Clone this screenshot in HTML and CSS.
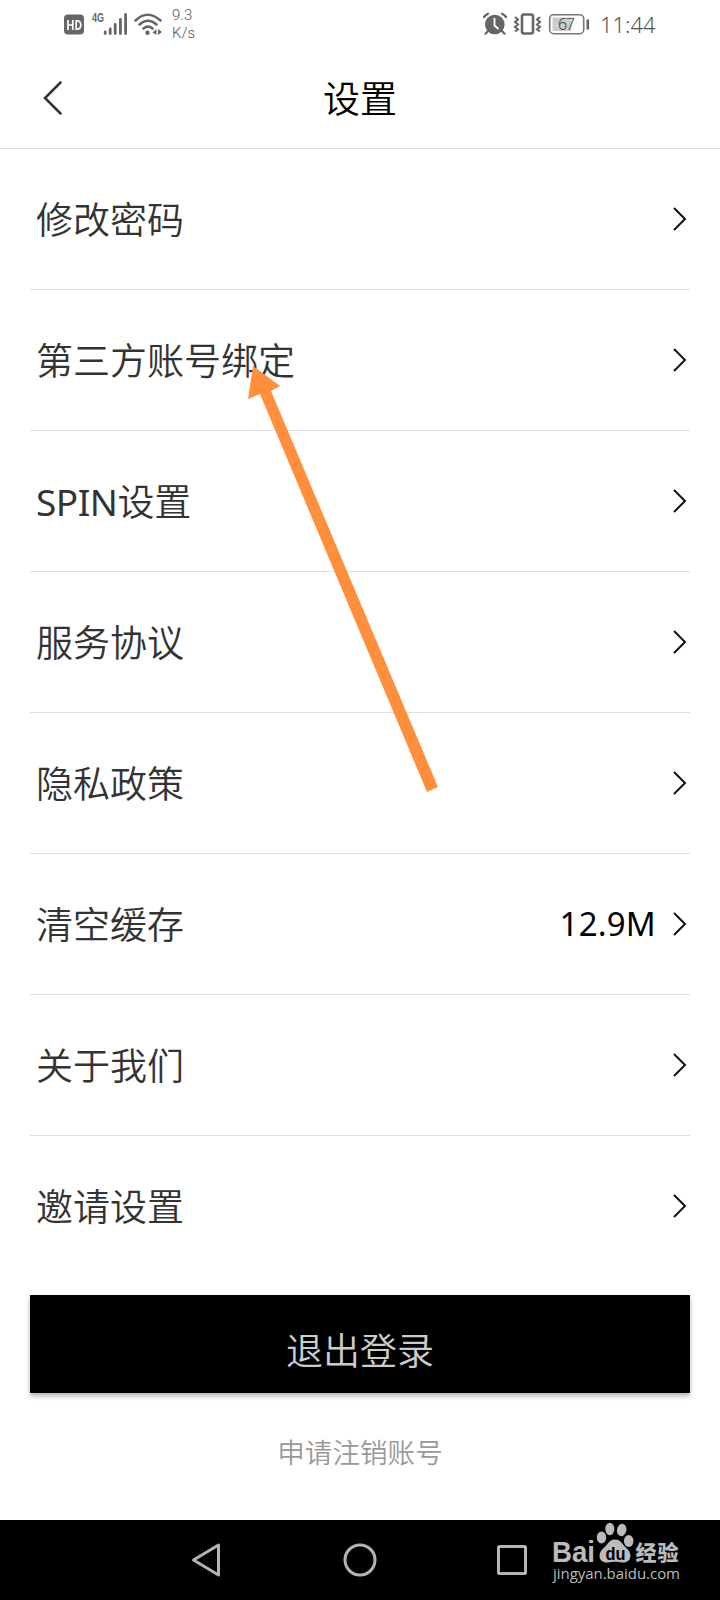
FILE: index.html
```html
<!DOCTYPE html>
<html lang="zh-CN">
<head>
	<meta charset="UTF-8">
	<title>设置</title>
	<link rel="stylesheet" href="styles.css">
</head>
<body>
	<div class="phone">
		<!-- 状态栏 -->
		<div class="status">
			<svg class="status-left" width="100" height="48" viewBox="0 0 100 48">
				<rect x="0" y="14.5" width="20" height="20" rx="4" fill="#666"/>
				<path d="M4 20v10M8.800 20v10M4 25H9M12.200 20.900v8.200h1.600q3-.3 3-4.100t-3-4.100z" fill="none" stroke="#fff" stroke-width="1.700"/>
				<text x="28" y="22" class="net" textLength="12" lengthAdjust="spacingAndGlyphs">4G</text>
				<path d="M41.200 32v1.500M46.200 29v4.500M51.200 24.500v9M56.400 19.500v14M61.600 14.500v19" fill="none" stroke="#666" stroke-width="2.800" stroke-linecap="round"/>
				<path d="M71.500 20.500q12-11.500 25 0M75.500 24.500q8.500-7.500 17 0M79.500 28.500q4.500-3.600 9 0" fill="none" stroke="#666" stroke-width="2.600" stroke-linecap="round"/>
				<circle cx="83.500" cy="32.700" r="2.200" fill="#666"/>
				<path d="M92.500 29v6l-4-2.500zM94 29v6l4-3z" fill="#666"/>
			</svg>
			<div class="speed">9.3<br>K/s</div>
			<svg class="status-right" width="110" height="48" viewBox="0 0 110 48">
				<circle cx="11.800" cy="24.500" r="9.800" fill="#666"/>
				<path d="M1 17q1.500-2 4-3.300M19 13.700q2.500 1.300 4 3.300M5 31l-2.500 2.800M19 31l2.500 2.800" fill="none" stroke="#666" stroke-width="2.200" stroke-linecap="round"/>
				<path d="M11.500 18v7.500l4 3.500" fill="none" stroke="#fff" stroke-width="1.800"/>
				<rect x="39" y="14.500" width="11" height="19" rx="2" fill="none" stroke="#666" stroke-width="2.600"/>
				<path d="M32 17l3 2.500-3 2.500 3 2.500-3 2.500 3 2.500-3 2M57 17l-3 2.500 3 2.500-3 2.500 3 2.500-3 2.500 3 2" fill="none" stroke="#666" stroke-width="2"/>
				<rect x="66.700" y="14.700" width="34" height="19" rx="4" fill="none" stroke="#777" stroke-width="1.600"/>
				<rect x="69.500" y="17.500" width="19" height="13.500" fill="#ccc"/>
				<path d="M104.800 20.500v8" stroke="#666" stroke-width="2.600" stroke-linecap="round"/>
				<text x="75" y="30" class="battery" textLength="17">67</text>
			</svg>
			<div class="time">11:44</div>
		</div>

		<!-- 标题 -->
		<div class="header">
			<svg class="back" width="20" height="34" viewBox="0 0 20 34"><path d="M17.500 1.500L2 17l15.500 15.500" fill="none" stroke="#333" stroke-width="2.500" stroke-linecap="round"/></svg>
			<h1>设置</h1>
		</div>

		<ul class="list">
			<li><span>修改密码</span><svg class="more" viewBox="0 0 14 24"><path d="M1 1l11 11L1 23"/></svg></li>
			<li><span>第三方账号绑定</span><svg class="more" viewBox="0 0 14 24"><path d="M1 1l11 11L1 23"/></svg></li>
			<li><span><b>SPIN</b>设置</span><svg class="more" viewBox="0 0 14 24"><path d="M1 1l11 11L1 23"/></svg></li>
			<li><span>服务协议</span><svg class="more" viewBox="0 0 14 24"><path d="M1 1l11 11L1 23"/></svg></li>
			<li><span>隐私政策</span><svg class="more" viewBox="0 0 14 24"><path d="M1 1l11 11L1 23"/></svg></li>
			<li><span>清空缓存</span><em>12.9M</em><svg class="more" viewBox="0 0 14 24"><path d="M1 1l11 11L1 23"/></svg></li>
			<li><span>关于我们</span><svg class="more" viewBox="0 0 14 24"><path d="M1 1l11 11L1 23"/></svg></li>
			<li><span>邀请设置</span><svg class="more" viewBox="0 0 14 24"><path d="M1 1l11 11L1 23"/></svg></li>
		</ul>

		<a class="logout" href="#">退出登录</a>
		<a class="cancel" href="#">申请注销账号</a>

		<!-- 底部导航 -->
		<div class="nav">
			<svg width="32" height="36" viewBox="0 0 32 36"><path d="M27.500 3v30L2.500 18z"/></svg>
			<svg width="36" height="36" viewBox="0 0 36 36"><circle cx="18" cy="18" r="15"/></svg>
			<svg width="32" height="32" viewBox="0 0 32 32"><rect x="1.500" y="2.500" width="27" height="27" rx="1"/></svg>
		</div>

		<!-- 箭头 -->
		<svg class="arrow" width="200" height="440" viewBox="0 0 200 440">
			<path d="M12 5l27 20-9 5 167 396-11 5L19 33l-12 5z" fill="#ff8f3c"/>
		</svg>

		<!-- 水印 -->
		<svg class="mark" width="140" height="70" viewBox="0 0 140 70">
			<text x="2" y="42" class="bai" textLength="43" lengthAdjust="spacingAndGlyphs">Bai</text>
			<g fill="#bbb">
				<ellipse cx="51.500" cy="17.500" rx="4.700" ry="6"/>
				<ellipse cx="59.800" cy="9" rx="4.500" ry="6.200"/>
				<ellipse cx="71.700" cy="10" rx="4.700" ry="6.200" transform="rotate(12 71.700 10)"/>
				<ellipse cx="78.700" cy="21" rx="4.800" ry="6"/>
				<path d="M65 19.500c4 0 6 2 8 5 2 3 7 5 7.500 11 0 5-4 7.500-8.500 7-5-1-9-1-14 0-5 .5-8.500-2-8.500-7 .5-6 5.500-8 7.500-11 2-3 4-5 8-5z"/>
			</g>
			<text x="55.500" y="39.500" class="du" textLength="20" lengthAdjust="spacingAndGlyphs">du</text>
			<text x="85.500" y="40" class="jy" textLength="43">经验</text>
			<text x="3" y="59" class="url" textLength="127">jingyan.baidu.com</text>
		</svg>
	</div>
</body>
</html>
```
FILE: styles.css
```css
* {
	margin: 0;
	padding: 0;
	list-style: none;
	box-sizing: border-box;
}
body {
	background: #fff;
	font-family: "Noto Sans", "Noto Sans CJK SC", sans-serif;
}
a {
	text-decoration: none;
}
.phone {
	position: relative;
	width: 720px;
	height: 1600px;
	overflow: hidden;
	display: flex;
	flex-direction: column;
}
.status {
	height: 48px;
	padding: 0 64px;
	display: flex;
	align-items: center;
	color: #666;
}
.net {
	font: bold 12px "Liberation Sans", sans-serif;
	fill: #666;
}
.speed {
	margin-left: 8px;
	font: 300 15px/18px Roboto, sans-serif;
	color: #555;
}
.status-right {
	margin-left: auto;
}
.battery {
	font: 300 16px "Noto Sans", sans-serif;
	fill: #444;
}
.time {
	margin-left: 7px;
	width: 56px;
	font-size: 22px;
	font-weight: 350;
	color: #555;
	white-space: nowrap;
}
.header {
	height: 101px;
	padding: 0 43px;
	display: grid;
	grid-template-columns: 1fr auto 1fr;
	align-items: center;
	border-bottom: 1px solid #e0e0e0;
}
.header h1 {
	padding-top: 1px;
	font-size: 37px;
	font-weight: 350;
	line-height: 50px;
	color: #000;
}
.list {
	padding: 0 30px;
}
.list li {
	height: 141px;
	padding: 0 3px 0 6px;
	display: flex;
	align-items: center;
	border-bottom: 1px solid #e0e0e0;
	font-size: 37px;
	font-weight: 350;
	line-height: 50px;
	color: #333;
}
.list li:last-child {
	height: 140px;
	border-bottom: 0;
}
.list span {
	padding-top: 1px;
}
.list b {
	font-weight: 400;
	letter-spacing: -0.5px;
}
.list em {
	margin-left: auto;
	margin-right: 17px;
	font-size: 33px;
	font-style: normal;
	font-weight: 400;
	letter-spacing: 0.2px;
	color: #000;
}
.more {
	width: 14px;
	height: 24px;
	margin-left: auto;
	fill: none;
	stroke: #111;
	stroke-width: 2;
}
em + .more {
	margin-left: 0;
}
.logout {
	margin: 19px 30px 0;
	height: 98px;
	background: #000;
	box-shadow: 0 3px 5px rgba(0,0,0,0.3);
	color: #ccc;
	font-size: 37px;
	font-weight: 350;
	line-height: 111px;
	text-align: center;
}
.cancel {
	margin-top: 39px;
	font-size: 27.600px;
	font-weight: 350;
	line-height: 40px;
	color: #999;
	text-align: center;
}
.nav {
	margin-top: auto;
	height: 80px;
	padding: 0 191px;
	background: #000;
	display: flex;
	align-items: center;
	justify-content: space-between;
}
.nav svg {
	fill: none;
	stroke: #b4b4b4;
	stroke-width: 3;
	stroke-linejoin: round;
}
.arrow {
	position: absolute;
	left: 241px;
	top: 361px;
}
.mark {
	position: absolute;
	left: 550px;
	top: 1520px;
	fill: #bbb;
}
.bai {
	font: bold 29px "Liberation Sans", sans-serif;
}
.du {
	font: bold 19px "Liberation Sans", sans-serif;
	fill: #000;
}
.jy {
	font: 900 21px "Noto Sans CJK SC", sans-serif;
}
.url {
	font: 500 15px "Open Sans", sans-serif;
}
```
